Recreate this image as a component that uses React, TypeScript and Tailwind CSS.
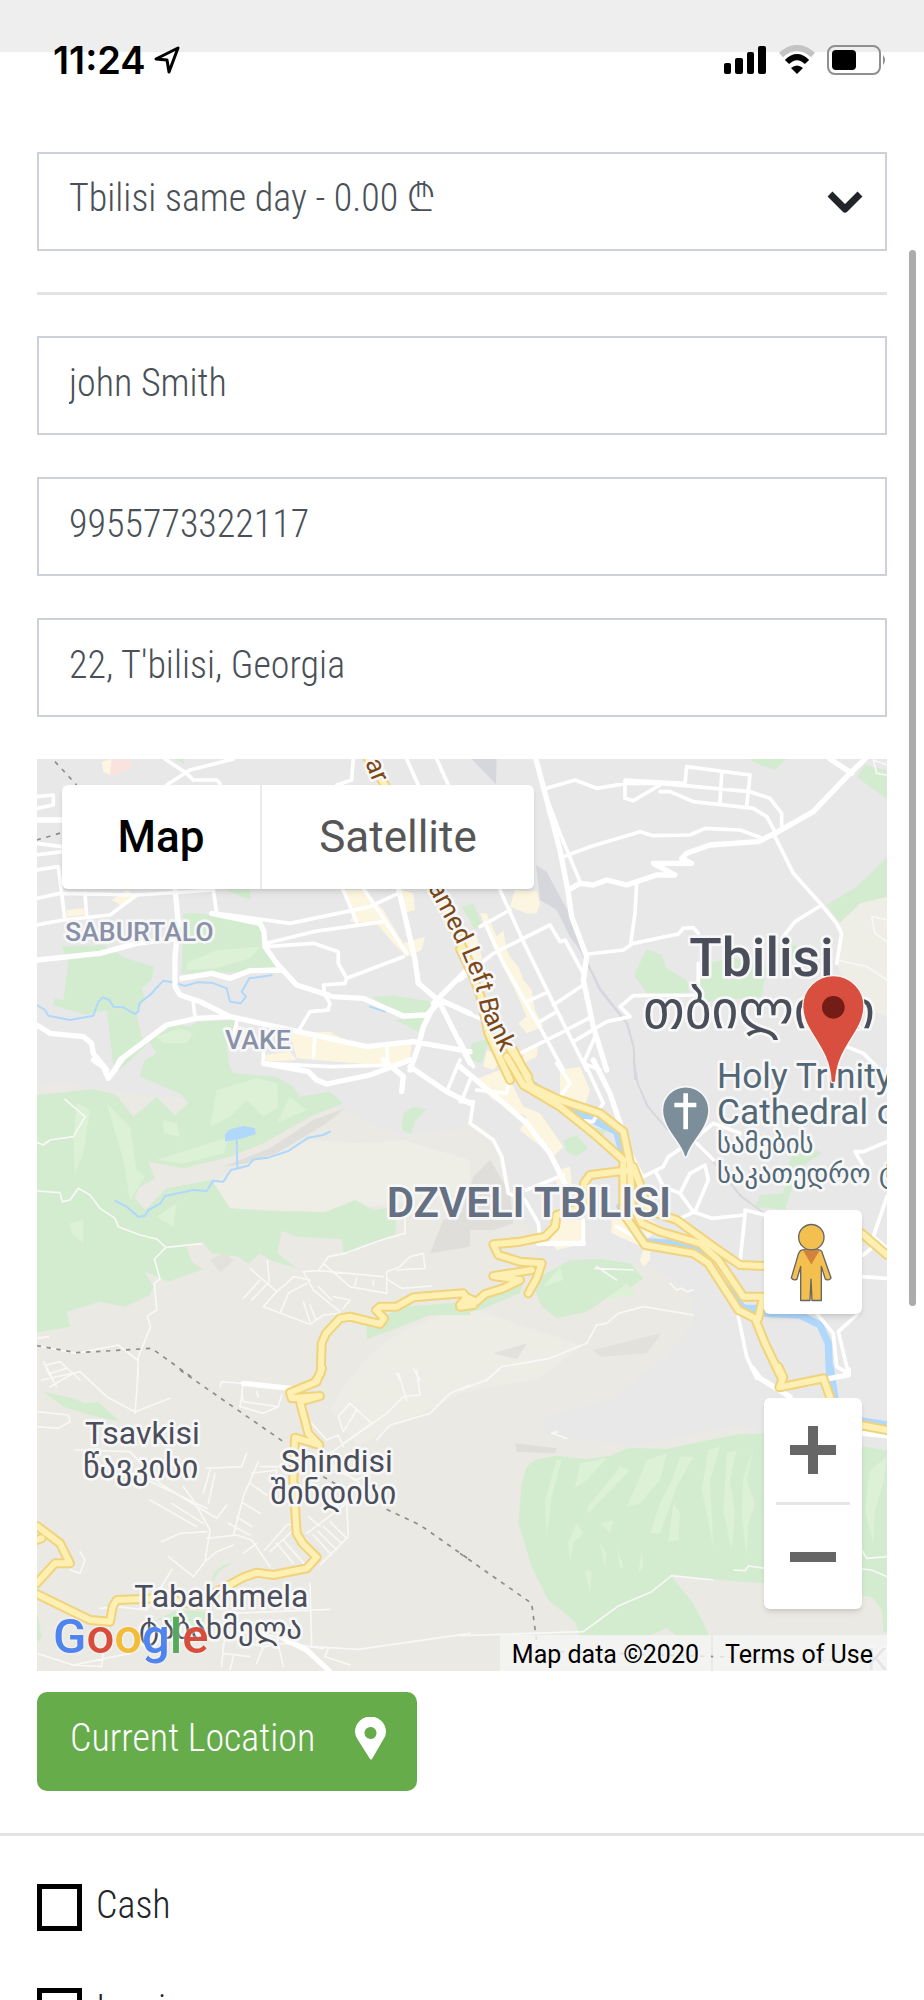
import { useState } from "react"

type Tile = {
  at: string
  hills?: string
  shade?: string
  parks?: string
  parksLight?: string
  builtUp?: string
  rail?: string
  lake?: string
  stream?: string
  river?: string
  thin?: string
  medium?: string
  wide?: string
  border?: string
  highway?: string
}

// The map is cut in six tiles, each one drawn in its own coordinates
const TILES: Tile[] = [
  {
    at: "translate(-21 -27)",
    parks:
      "M95 590L220 585L290 625L372 650L365 690L335 715L345 745L320 790L235 780L170 795L68 765L75 745L100 750L115 640Z M460 490L510 490L690 525L700 580L740 650L650 665L455 672Z M230 780L320 790L335 860L355 880L270 960L250 945L240 860Z M355 870L420 820L480 830L500 815L620 810L590 880L600 970L330 970L345 930L380 910Z M1030 740L1090 737L1210 755L1190 790L1130 795L1060 780Z M1095 810L1190 800L1165 845Z M580 418L660 418L660 450Z M430 27L465 27L460 40Z",
    parksLight: "M470 640L560 600L690 590L660 625L560 655L470 660Z M380 860L450 835L490 850L470 880L400 880Z",
    builtUp:
      "M215 35L245 27L240 75L220 65Z M245 450L290 420L320 440L280 470Z M110 480L160 475L165 495L110 500Z M930 420L1000 420L1060 480L1120 580L1185 560L1175 600L1130 620L1090 580L1040 520L960 515L975 480Z M1115 420L1150 430L1155 480L1120 490Z M780 850L900 845L960 880L1060 895L1145 880L1140 935L1040 945L800 925Z M620 825L660 840L640 870L600 870Z M700 915L780 905L800 930L710 935Z",
    stream:
      "M20 765L45 780L55 797L120 810L190 797L205 755L220 742L238 750L250 770L280 772L315 792L325 785L328 760L360 735L400 692L430 697L465 708L500 697L545 698L590 715L600 755L632 760L648 740L635 725L658 685L725 676 M880 730L940 738 M1020 770L1065 785",
    wide:
      "M435 415L445 520L435 620L435 710L450 735L510 755L600 800L830 850L1010 890L1150 875L1320 905 M455 685L545 670L600 685L660 662L755 660 M545 490L690 520L702 545L705 590L740 640L800 705L910 740L1000 745L1120 798L1190 795L1230 755L1165 700L1155 630L1130 520L1105 415 M1210 760L1320 650 M1230 760L1250 800L1320 940 M1210 770L1180 830L1165 890L1140 960 M1230 750L1320 790 M20 825L60 850L160 860L185 880L190 910L230 960 M255 960L270 930L410 825L500 805L600 800 M20 630L210 610L320 580L440 565 M20 210L95 210",
    medium:
      "M20 140L70 135L70 165L20 175 M20 280L95 290 M20 315L95 305 M20 360L85 350 M20 445L90 430L320 435L550 420 M85 350L105 510 M165 430L170 500 M20 525L100 510L240 495L300 450L320 435 M550 420L560 490 M490 760L495 800 M710 580L850 545L1060 515 M710 590L850 580L925 605L925 640L950 685L1120 620 M950 685L945 700L880 705L885 735L900 760L895 780L840 785L810 835 M560 490L780 520L1020 470L1105 430 M940 420L980 515 M1000 415L1130 610 M405 27L470 70L490 90L560 90L570 100 M410 105L480 60L610 27 M970 27L965 90L920 105 M1130 27L1165 105 M1220 27L1255 105 M620 815L610 860 M700 910L700 940L900 950L1100 945 M855 860L850 920 M1070 890L1075 945",
    border: "M75 35L140 105 M20 270L95 248",
    highway: "M1010 20L1065 105L1215 415L1320 640",
  },
  {
    at: "translate(1269 -27)",
    hills: "M1281 440L1200 460L1140 518L1130 640L1180 760L1281 800Z",
    parks:
      "M870 27L980 27L945 60L885 40Z M1190 80L1215 45L1281 60L1281 147L1235 115Z M1281 320L1281 440L1200 460L1140 518L1100 465L1190 410Z M560 597L605 615L620 655L680 690L690 735L560 730L522 675Z M730 640L830 625L920 650L905 740L730 755L715 700Z M955 590L1010 585L1010 620L960 620Z M5 470L40 460L65 520L45 540Z M35 880L90 865L65 940L30 930Z",
    builtUp:
      "M165 420L230 425L240 460L230 490L200 490L150 470Z M60 490L80 490L110 560L130 540L140 600L150 620L175 650L190 690L215 720L225 780L250 830L200 850L175 820L200 800L165 720L150 690L100 590Z M255 160L275 210L285 240L262 190Z M0 570L50 560L70 640L40 640Z M80 900L130 920L100 960L70 950Z M190 900L235 880L230 920L190 940Z",
    rail: "M35 27L110 27L108 103Z M228 345L260 365L300 440L350 530L365 610L330 560L290 480L240 450Z M366 600L424 716L504 818L524 890L528 990L522 990L518 892L498 822L418 722L362 606Z",
    wide:
      "M228 27L255 130L300 300L325 430L335 500L380 620L370 690L400 830L440 960 M1215 27L1160 80L1060 185L945 250L895 275L750 285L680 310L665 325L695 340L580 340L645 375L590 375L500 405L440 390L400 405L360 400L325 420 M1110 27L1175 70",
    medium:
      "M260 115L345 90L410 115L500 100L600 100L870 125L930 145L965 190L965 240 M495 90L495 145L520 152L600 105 M495 90L675 100L680 50L870 75L860 170 M785 70L780 160 M600 125L630 125L700 155L880 175L920 200L945 245 M310 320L390 290L540 245L580 257L690 255L735 235L840 240L900 262 M255 130L300 250L360 395 M945 260L1000 370L1085 465L1130 520L1145 550L1130 640 M1085 465L1005 515L970 560 M530 400L525 490L512 580 M385 612L490 600L520 580L655 552L670 535L700 533L715 550 M715 640L715 735L520 737L480 770L510 800L440 815L340 875 M120 420L190 575L300 800L380 960 M60 530L150 480 M0 690L100 610L270 525L300 575L315 570L375 680 M200 755L255 730 M280 765L370 705 M240 815L290 785 M180 910L300 850L395 800 M75 520L130 640L250 850L310 960 M405 860L370 940L420 960 M0 780L70 810 M0 870L40 950 M1160 890L1210 910L1260 960",
    thin: "M1281 510L1235 500L1245 550L1281 575 M1130 630L1220 650L1281 690 M1240 30L1250 70L1281 75 M1240 30L1281 45",
    highway: "M0 597L40 680L62 740L85 850L150 990 M140 880L205 980",
  },
  {
    at: "translate(-21 903)",
    hills: "M550 370L610 330L840 240L1000 250L1120 240L1320 300L1320 400L900 455L600 445Z",
    shade: "M580 320L720 265L850 180L945 145L890 190L740 280L650 310Z M1240 480L1320 450L1320 560L1200 580Z",
    parks:
      "M20 105L190 88L260 105L310 170L380 110L435 165L475 130L450 100L330 50L345 0L590 0L610 40L740 50L790 80L810 110L900 95L940 130L840 170L700 250L600 290L460 325L355 305L375 355L325 385L315 415L345 450L410 385L545 360L600 445L700 452L885 457L975 420L1030 450L1100 440L1095 525L985 560L960 580L940 577L935 537L800 530L755 512L742 580L800 625L720 600L690 580L655 612L625 590L545 580L520 550L470 560L485 605L518 628L415 665L345 635L370 680L360 705L285 740L210 725L110 755L120 800L20 818Z M1120 160L1150 140L1190 147L1155 185L1142 222L1115 210Z M1010 795L1060 770L1120 740L1320 725L1320 765L1200 765L1100 805L1010 838Z",
    parksLight:
      "M560 90L680 55L740 70L745 140L700 170L650 120L600 170L540 200Z M140 130L180 150L160 280L135 340L130 250Z M230 130L300 200L320 330L345 350L300 420L280 300Z M400 180L440 190L450 230L400 220Z M780 110L830 150L740 190Z M380 300L600 230L580 280L460 310Z M380 470L440 430L430 500Z M120 490L160 480L160 550L125 520Z",
    lake: "M585 245L585 222L600 208L640 198L675 205L677 222L640 235Z",
    stream:
      "M256 423L290 440L325 470L345 467L355 450L392 430L405 408L490 390L530 393L550 362L580 365L603 330L655 317L670 298L715 293L775 273L835 233L880 225L900 215 M622 322L620 240",
    wide:
      "M190 0L220 20L235 55L275 0 M700 10L835 35L860 60L890 72L1020 45L1140 0 M1060 0L1120 50L1115 95 M1140 20L1250 95L1320 130",
    medium: "M1250 95L1290 0 M1300 110L1320 60",
    thin:
      "M105 118L165 170L130 230L60 240L40 255L20 247 M20 393L90 398L97 425L120 420L145 385L180 405L210 445L255 475L265 500L330 525L380 537L408 562L515 551 M408 562L373 597L390 657L373 670L380 750L352 768L362 800L325 890L322 960 M1125 470L1125 520L1070 535L945 580L895 590L865 632L820 635L850 690L930 755 M865 632L1060 650 M880 610L960 680L1070 700 M840 660L790 650L770 670L740 695 M830 670L775 700L750 760 M700 740L840 793L880 765L930 760 M660 625L740 695L700 740 M712 600L718 665L665 720 M690 660L640 715 M1070 700L1070 635L1110 620L1140 590L1180 580L1185 625L1100 630 M1075 660L1115 685L1205 678 M865 680L905 720 M820 725L840 785 M840 735L858 780 M910 710L960 720L940 745 M980 655L975 675 M1030 660L1030 675 M20 835L55 830 M20 857L140 880L265 855L322 900 M40 905L70 960 M50 915L90 905L150 960 M60 940L110 925 M1100 940L1110 960 M1150 925L1170 960",
    border: "M20 857L140 878L365 865L490 955",
    highway: "M1330 735L1290 740L1315 725L1300 700L1150 712L1100 740L1050 740L1038 750L1062 775L1050 792L960 770L930 775L888 820L875 850L872 940L855 965",
  },
  {
    at: "translate(1269 903)",
    shade: "M40 350L90 300L150 400L160 490L100 510L0 510L0 470Z",
    parks:
      "M310 240L350 225L385 265L350 288L320 275Z M350 190L440 210L420 240L390 220Z M240 650L330 600L420 597L510 610L550 655L500 690L440 715L380 755L290 775L245 740L225 690Z M1010 240L1085 280L1040 310L990 400L975 450L885 440L900 405L970 400L990 300Z M0 720L130 680L190 670L180 700L60 750L0 762Z M280 375L310 360L320 378Z",
    parksLight: "M440 715L500 670L530 705Z M250 680L300 620L310 660Z",
    builtUp:
      "M40 60L120 30L150 60L190 140L240 160L310 260L280 290L230 250L180 210L200 170L100 120Z M300 30L360 20L390 90L370 150L300 130Z M285 480L375 480L375 550L290 570L270 540Z M455 480L560 470L600 500L560 540L540 600L550 620L570 600L570 570L500 540L455 520Z M290 330L330 320L335 370L290 400Z",
    rail: "M518 0L530 70L560 140L620 210L700 250L760 310L840 410L915 465L915 459L844 406L764 306L703 245L624 206L566 138L536 70L524 0Z",
    river:
      "M200 60L300 135L400 180L470 215L490 290 M480 440L555 545L640 550L730 580L780 660L850 745L885 745 M915 760L1020 765L1080 795L1105 850L1110 990",
    wide:
      "M400 0L450 100L510 280L545 350 M0 20L120 120L200 190L270 280L330 400 M235 550L370 550",
    medium:
      "M0 125L40 125L30 190L100 240L125 290L145 400L195 420L235 490L240 550 M370 550L370 480 M50 90L140 100L150 30 M290 10L330 70L300 110 M370 0L430 130L420 145 M340 180L400 185L410 165 M550 350L610 320L625 290L700 240L760 190L840 220 M710 250L760 300 M590 340L610 380L660 400L700 455L755 475L855 465L855 450L915 465 M855 465L840 605 M660 400L690 340L735 315L745 360L705 455L650 480L600 465 M200 390L310 345 M835 770L860 890L890 955 M1281 410L1240 530L1281 565 M1205 650L1281 655 M1210 585L1240 560 M1281 245L1210 275L1185 275L1215 325L1190 350 M1070 760L1120 820L1130 920L1165 940L1135 815L1190 765 M470 500L540 540",
    thin:
      "M80 960L125 920L270 895L380 850L410 795L440 790L475 760L550 740L700 765 M410 620L470 660 M405 625L520 630 M630 670L650 690L665 685L680 695L700 690",
    highway:
      "M140 -10L190 75L300 140L400 220L490 300L490 460L555 555L700 580L745 610L835 750L885 775L915 850L965 955 M160 -30L215 80L300 120L420 160L490 215L510 310L515 430L545 490L600 515L720 550L775 600L850 710L910 710L895 775 M520 320L550 400L560 450L650 480L760 560L840 615L915 618 M1205 520L1281 585 M510 330L390 345L372 370L370 440L290 465L285 500L255 530L180 545L100 553L115 585L180 605L245 610L230 655L205 700 M215 630L100 648L180 660L130 685L75 702L50 725L20 712L0 735",
  },
  {
    at: "translate(-21 1833)",
    parks:
      "M40 65L130 85L165 100L205 95L270 155L200 140L100 110Z M610 578L570 600L545 640L550 610L580 585Z M20 720L35 800L20 820Z M380 750L440 720L540 725L510 770Z",
    thin:
      "M325 0L315 130 M35 30L150 5L230 80L315 125L420 85 M50 0L80 50 M60 50L130 10 M20 125L115 135L120 155L85 175L20 170 M135 240L300 245L390 340L470 390L560 445L590 405 M330 320L530 415 M530 295L635 290L650 250 M540 300L520 370 M555 310L535 400 M360 390L500 470 M425 400L520 460 M460 350L490 390L540 480L525 575L490 620L415 560 M395 515L450 490L530 485 M525 575L560 545L610 525 M530 505L620 495L665 510L720 590 M685 275L640 380L610 495 M665 310L740 300L735 350 M660 340L710 375 M640 400L690 430 M620 440L665 470 M595 460L660 495 M570 50L575 35L640 40L630 110L700 130L745 110L755 75 M635 60L640 95L745 110 M680 65L685 80 M960 100L1025 160L940 220 M960 100L925 140L940 185L980 120 M845 160L890 210L925 195L940 230 M1320 45L1260 70L1200 130L1080 165L1040 210 M1070 130L900 250 M1070 130L1120 80L1170 75L1160 0 M1105 10L1130 90 M830 490L950 400L955 500L870 585 M835 440L870 470 M850 495L905 555 M865 485L920 540 M880 470L935 520 M900 455L950 505 M720 545L790 480 M740 520L790 580 M760 510L830 590 M640 550L680 520 M705 540L770 465L800 460 M20 850L130 885L215 890L220 840 M130 885L300 850 M210 715L260 710L350 720L400 640L425 600 M600 730L580 830L575 890 M600 730L900 718 M840 640L845 830L985 838L1320 790 M600 780L740 800L760 890 M620 810L700 830L680 880 M580 850L660 860 M700 830L760 820L880 835 M895 835L885 860L960 885 M150 545L165 570L150 610L120 600 M610 860L600 900 M900 290L980 330L1020 310 M870 260L990 340 M690 290L780 290",
    wide: "M640 40L780 55 M750 800L830 840L900 905",
    border: "M450 0L760 215 M880 320L930 350 M1070 418L1170 465L1320 570",
    highway:
      "M876 -5L860 35L780 68L785 85L870 78L810 95L835 190L868 225L795 203L790 330L800 490L818 520L860 562L830 595L730 615L680 608L640 622L560 665L500 705L400 685L260 690L248 710L240 755L180 750L20 672 M20 640L75 580L120 580L90 520L20 467 M20 510L35 505",
  },
  {
    at: "translate(1269 1833)",
    shade: "M165 220L290 235L285 250L170 245Z",
    parks:
      "M225 270L285 257L380 268L450 257L505 233L620 237L760 207L840 193L930 190L1281 240L1281 790L1270 785L1265 720L1240 685L1150 660L1000 640L860 637L760 628L635 620L700 700L745 790L745 800L655 800L620 775L560 800L360 800L345 755L265 690L215 590L175 460L185 340L200 290Z",
    parksLight:
      "M290 270L305 270L275 380L260 500L255 390Z M360 280L440 265L380 330L345 355Z M480 290L510 300L385 430L380 415Z M560 270L620 250L600 330L540 400L500 410L540 320Z M660 260L700 260L650 350L600 490L570 490L600 400L640 320Z M640 400L660 430L655 510L625 515Z M745 240L780 230L750 330L755 430L760 530L740 430L725 360Z M800 250L830 240L810 330L825 430L815 540L790 420Z M880 240L860 330L885 400L865 460L860 560L845 430L850 320Z M350 460L370 490L340 520L330 575L325 515Z M420 520L440 550L435 590Z M470 530L490 590L480 595Z M545 540L550 590L535 610Z M375 600L395 605L390 670Z M1230 300L1281 260L1270 340L1245 420L1240 520L1215 420Z M420 460L460 450L450 490Z",
    river: "M1110 -10L1125 85 M1200 152L1281 165",
    wide: "M878 -5L900 25L990 80 M1110 25L1165 15L1165 0 M1205 190L1281 197",
    thin:
      "M0 797L370 785L475 708L575 665L635 617L760 630 M822 600L855 602L865 588L915 595 M1205 540L1220 565L1281 560 M1205 597L1235 600L1281 620 M0 60L80 30L115 0 M320 205L275 190L292 185",
    border: "M0 550L215 700L232 830 M300 845L1240 875",
    highway: "M955 -10L970 22L958 52L1090 25L1115 95 M1200 165L1281 180",
  },
]

const HALO = "[paint-order:stroke] stroke-[#f7f7f7] stroke-[16px] [stroke-linejoin:round]"
const LATIN = "font-[Roboto,sans-serif]"
const GEORGIAN = "font-['DejaVu_Sans',sans-serif]"

const CityMap = () => (
  <svg
    viewBox="0 0 2550 2736"
    preserveAspectRatio="xMidYMid slice"
    className="block w-full h-full"
    role="img"
    aria-label="Map of Tbilisi"
  >
    <rect width="2550" height="2736" fill="#e8e8e8" />
    <path
      d="M0 975L80 970L230 1000L900 1050L1100 1130L1269 1110L1330 1090L1400 1200L1430 1310L1500 1460L1500 1520L1830 1510L1960 1600L1970 1690L1880 1800L1829 1833L1730 1920L1520 1970L1520 2030L1800 2060L2100 2000L2550 2120L2550 2736L0 2736Z"
      fill="#eae9e4"
    />
    <path d="M224 3L279 0L284 28L219 51Z" fill="#fae3df" />
    <path
      d="M880 1950Q960 1800 1090 1720L1280 1640L1460 1700L1640 1760L1500 1860L1280 1900L1100 1990L960 2060Z"
      fill="#edece5"
    />
    {/* slopes */}
    <path
      d="M1669 1773L1829 1733L1874 1723L1829 1783L1690 1793Z M1369 1783L1470 1753L1440 1800Z M519 1503L560 1483L590 1503L550 1540Z"
      fill="#e2e1dc"
    />

    {TILES.map(t => (
      <g key={t.at} transform={t.at}>
        <path d={t.hills} fill="#eeede6" />
        <path d={t.shade} fill="#dfdeda" />
        <path d={t.parks} fill="#d3ecd0" />
        <path d={t.parksLight} fill="#dcf1d6" />
        <path d={t.builtUp} fill="#fcf5df" />
        <path d={t.rail} fill="#d5d7dd" />
        <path d={t.lake} fill="#b0d7fc" />
      </g>
    ))}

    <g fill="none" strokeLinejoin="round" strokeLinecap="round">
      {TILES.map(t => (
        <g key={t.at} transform={t.at}>
          <path d={t.stream} stroke="#b0d7fc" strokeWidth="6" />
          <path d={t.river} stroke="#b0d7fc" strokeWidth="22" />
          <path d={t.thin} stroke="#f8f8f6" strokeWidth="5" />
          <path d={t.medium} stroke="#ffffff" strokeWidth="11" />
          <path d={t.wide} stroke="#ffffff" strokeWidth="16" />
        </g>
      ))}
      {TILES.map(t => (
        <path key={t.at} transform={t.at} d={t.border} stroke="#8e8e8e" strokeWidth="5" strokeDasharray="13 17" strokeLinecap="butt" />
      ))}
      {TILES.map(t => (
        <path key={t.at} transform={t.at} d={t.highway} stroke="#f0d37c" strokeWidth="30" />
      ))}
      {TILES.map(t => (
        <path key={t.at} transform={t.at} d={t.highway} stroke="#fdf0b2" strokeWidth="18" />
      ))}
    </g>

    {/* street name along the embankment */}
    <path id="bank" d="M1172 385L1210 455L1280 594L1315 680L1334 763L1420 940" fill="none" />
    <g className={`${LATIN} ${HALO} text-[78px]`} fill="#7a4716">
      <text><textPath href="#bank">amed Left Bank</textPath></text>
      <text transform="translate(984 10) rotate(68)">ar</text>
    </g>

    <g className={`${LATIN} ${HALO} font-medium`}>
      <text x="84" y="545" fill="#8891a8" className="text-[80px]">SABURTALO</text>
      <text x="564" y="870" fill="#8891a8" className="text-[80px]">VAKE</text>
      <text x="1049" y="1373" fill="#667083" className="text-[126px] font-semibold">DZVELI TBILISI</text>
      <text x="1957" y="651" fill="#4a4e5a" className="text-[160px]">Tbilisi</text>
    </g>
    <g className={`${LATIN} ${HALO}`} fill="#4a4e5a">
      <text x="144" y="2055" className="text-[96px]">Tsavkisi</text>
      <text x="731" y="2138" className="text-[96px]">Shindisi</text>
      <text x="292" y="2545" className="text-[96px]">Tabakhmela</text>
      <text x="2040" y="988" fill="#526876" className="text-[106px]">Holy Trinity</text>
      <text x="2040" y="1095" fill="#526876" className="text-[106px]">Cathedral of</text>
      <text x="2490" y="2733" fill="#a5a5a5" className="text-[96px]">Kv</text>
    </g>
    <g className={`${GEORGIAN} ${HALO}`} fill="#4a4e5a">
      <text x="1818" y="808" className="text-[156px]">თბილისი</text>
      <text x="138" y="2156" className="text-[96px]">წავკისი</text>
      <text x="700" y="2236" className="text-[96px]">შინდისი</text>
      <text x="306" y="2641" className="text-[92px]">ტაბახმელა</text>
      <text x="2040" y="1183" fill="#526876" className="text-[80px]">სამების</text>
      <text x="2040" y="1271" fill="#526876" className="text-[80px]">საკათედრო ტაძარი</text>
    </g>

    {/* cathedral */}
    <path
      d="M1941 1190C1932 1150 1876 1110 1876 1053A70 70 0 0 1 2016 1053C2016 1110 1960 1150 1951 1190Q1946 1200 1941 1190Z"
      fill="#7b8e9a"
      stroke="#f7f7f7"
      strokeWidth="5"
    />
    <path d="M1939 1003H1953V1031H1978V1045H1953V1111H1939V1045H1912V1031H1939Z" fill="#ffffff" />

    {/* selected place */}
    <path
      d="M2382 968C2378 860 2297 820 2297 742A92 92 0 0 1 2481 742C2481 820 2400 860 2396 968Q2389 974 2382 968Z"
      fill="#d94f3f"
      stroke="#f7f7f7"
      strokeWidth="4"
    />
    <circle cx="2389" cy="745" r="34" fill="#741d17" />
  </svg>
)

const Pegman = () => (
  <svg viewBox="0 0 126 236" className="w-[42px] h-[79px]" aria-hidden="true">
    <g fill="#f3bf4e" stroke="#666666" strokeWidth="4" strokeLinejoin="round">
      <path d="M32 82Q40 78 48 80H80Q88 78 95 84L123 164Q118 174 106 168L94 130V232H66L63 168L60 232H32V130L21 168Q10 174 4 164L26 90Z" />
      <circle cx="64" cy="42" r="38" />
    </g>
    <path d="M38 80Q64 88 90 80L64 124Z" fill="#d3823b" />
  </svg>
)

const StatusBar = () => (
  <header className="flex items-center justify-between h-[110px] pt-[10px] pl-[53px] pr-[37px] bg-[linear-gradient(#eeeeee_52px,#ffffff_52px)]">
    <div className="flex items-center gap-2">
      <span className="text-[38px] leading-10 font-semibold font-[Inter,sans-serif] text-black">11:24</span>
      <svg viewBox="0 0 26 28" className="w-[26px] h-7" aria-hidden="true">
        <path d="M2 13L24 2L15 26L13 14Z" fill="none" stroke="#000000" strokeWidth="3" strokeLinejoin="round" />
      </svg>
    </div>
    <div className="flex items-center gap-3">
      <svg viewBox="0 0 44 30" className="w-11 h-[30px]" aria-hidden="true">
        <rect x="1" y="18" width="7" height="11" rx="2" />
        <rect x="12" y="13" width="8" height="16" rx="2" />
        <rect x="24" y="7" width="7" height="22" rx="2" />
        <rect x="35" y="1" width="8" height="28" rx="2" />
      </svg>
      <svg viewBox="0 0 36 30" className="w-9 h-[30px]" fill="none" aria-hidden="true">
        <path d="M2 10Q18 -4 34 10" stroke="#c4c4c4" strokeWidth="6" />
        <path d="M8 17Q18 7 28 17" stroke="#000000" strokeWidth="6" />
        <path d="M12 23Q18 18 24 23L18 29Z" fill="#000000" />
      </svg>
      <svg viewBox="0 0 60 30" className="w-[60px] h-[30px]" aria-hidden="true">
        <rect x="1" y="1" width="52" height="28" rx="7" fill="none" stroke="#8f8f8f" strokeWidth="2" />
        <rect x="5" y="5" width="24" height="20" rx="4" />
        <path d="M56 10Q60 15 56 20Z" fill="#8f8f8f" />
      </svg>
    </div>
  </header>
)

const FIELD =
  "block w-full h-[99px] pl-[30px] pb-[6px] border-2 border-[#cdd0d9] rounded-none bg-white text-[38px] font-light text-[#495057] outline-none"

const App = () => {
  const [name, setName] = useState("john Smith")
  const [phone, setPhone] = useState("9955773322117")
  const [address, setAddress] = useState("22, T'bilisi, Georgia")
  const [mapType, setMapType] = useState("map")

  return (
    <div className="relative h-screen overflow-hidden bg-white font-['Roboto_Condensed','Liberation_Sans_Narrow',Roboto,'Noto_Sans','DejaVu_Sans',sans-serif]">
      <StatusBar />

      <main>
        <form className="px-[37px] pt-[42px]" onSubmit={e => e.preventDefault()}>
          <div className="relative">
            <select aria-label="Delivery" className={`${FIELD} appearance-none pr-20`}>
              <option>Tbilisi same day - 0.00 ₾</option>
            </select>
            <svg viewBox="0 0 36 24" className="absolute right-6 top-[38px] w-9 h-6 pointer-events-none" aria-hidden="true">
              <path d="M3 4L18 19L33 4" fill="none" stroke="#212529" strokeWidth="7" strokeLinejoin="round" />
            </svg>
          </div>

          <hr className="my-[41px] border-0 h-[3px] bg-[#e3e3e3]" />

          <div className="flex flex-col gap-[42px]">
            <input aria-label="Name" className={FIELD} value={name} onChange={e => setName(e.target.value)} />
            <input aria-label="Phone" type="tel" className={FIELD} value={phone} onChange={e => setPhone(e.target.value)} />
            <input aria-label="Address" className={FIELD} value={address} onChange={e => setAddress(e.target.value)} />

            <section className="relative h-[912px] overflow-hidden font-[Roboto,sans-serif]">
              <CityMap />

              <div className="absolute left-[25px] top-[26px] flex h-[104px] rounded-md bg-white shadow-md text-[44px] overflow-hidden">
                <button type="button" onClick={() => setMapType("map")} aria-pressed={mapType === "map"} className="w-[200px] font-medium text-black border-r-2 border-[#ececec]">Map</button>
                <button type="button" onClick={() => setMapType("satellite")} aria-pressed={mapType === "satellite"} className="w-[272px] text-[#565656]">Satellite</button>
              </div>

              <div className="absolute right-[25px] bottom-[62px] flex flex-col gap-[84px]">
                <button type="button" aria-label="Street View" className="flex items-center justify-center w-[98px] h-[104px] pr-1 rounded-md bg-white shadow-md">
                  <Pegman />
                </button>
                <div className="flex flex-col items-center w-[98px] rounded-md bg-white shadow-md">
                  <button type="button" aria-label="Zoom in" className="flex items-center justify-center w-full h-[104px]">
                    <svg viewBox="0 0 46 48" className="w-[46px] h-12" fill="#666666" aria-hidden="true">
                      <path d="M18 0H28V19H46V29H28V48H18V29H0V19H18Z" />
                    </svg>
                  </button>
                  <span className="w-[74px] h-[3px] bg-[#e6e6e6]" />
                  <button type="button" aria-label="Zoom out" className="flex items-center justify-center w-full h-[104px]">
                    <svg viewBox="0 0 46 48" className="w-[46px] h-12" fill="#666666" aria-hidden="true">
                      <path d="M0 19H46V29H0Z" />
                    </svg>
                  </button>
                </div>
              </div>

              <a href="#google" aria-label="Google" className="absolute left-4 bottom-1 text-[49px] leading-[60px] font-medium text-[#4f83ee] [text-shadow:0_0_3px_#ffffff]">
                G<span className="text-[#d84c3c]">o</span><span className="text-[#f2bc3b]">o</span>g<span className="text-[#55a959]">l</span><span className="text-[#d84c3c]">e</span>
              </a>

              <div className="absolute right-0 bottom-0 flex h-9 text-[25px] leading-10 text-black">
                <span className="px-3 bg-[#f5f5f5]/80">Map data ©2020</span>
                <a href="#terms" className="ml-[2px] pl-3 pr-[14px] bg-[#f5f5f5]/80">Terms of Use</a>
              </div>
            </section>
          </div>

          <button type="button" className="flex items-center gap-10 h-[99px] mt-[21px] pl-[33px] pr-[31px] pb-[6px] rounded-[10px] bg-[#66ac4b] text-white text-[38px] font-light">
            Current Location
            <svg viewBox="0 0 31 43" className="w-[31px] h-[43px]" aria-hidden="true">
              <path fillRule="evenodd" d="M15 42L3 23Q0 19 0 15A15 15 0 0 1 31 15Q31 19 28 23L17 42Q16 43 15 42ZM15 10A6 6 0 1 0 16 22A6 6 0 1 0 15 10Z" fill="#ffffff" />
            </svg>
          </button>
        </form>

        <hr className="mt-[42px] border-0 h-[3px] bg-[#e3e3e3]" />

        <div className="flex flex-col gap-[57px] px-[37px] pt-12 text-[38px] leading-[47px] font-light text-[#212529]">
          {["Cash", "Invoice"].map(label => (
            <label key={label} className="flex items-center gap-[14px] h-[47px]">
              <input type="checkbox" className="appearance-none w-[45px] h-[47px] border-5 border-black checked:bg-black" />
              <span className="pb-1">{label}</span>
            </label>
          ))}
        </div>
      </main>

      <div className="absolute right-2 top-[250px] w-[7px] h-[1056px] rounded-full bg-[#a9abac]" />
    </div>
  )
}

export default App
